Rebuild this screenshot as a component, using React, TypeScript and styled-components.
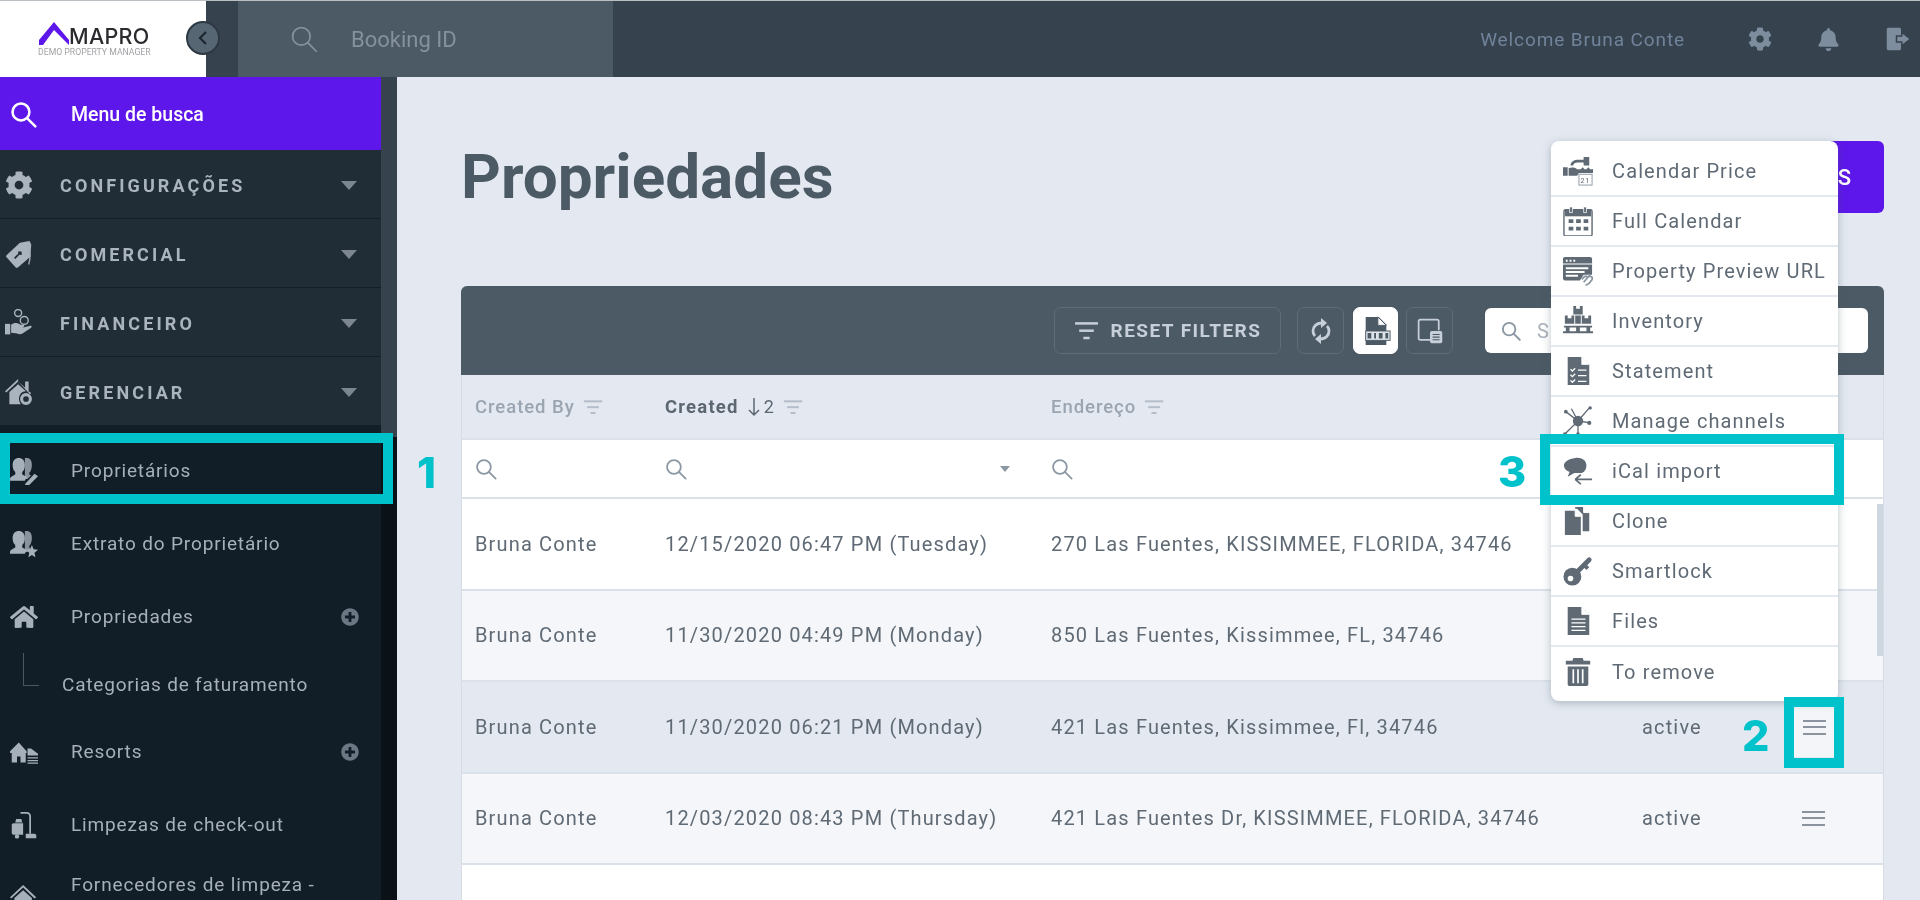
import React from "react";
import styled, { createGlobalStyle } from "styled-components";
import { FaBell, FaCog, FaHome, FaPlusCircle } from "react-icons/fa";

const CYAN = "#00c2cb";
const SLATE = "#4c5a65";
const TEXT = "#5f6a75";

const GlobalStyle = createGlobalStyle`
  html, body { margin: 0; padding: 0; background: #e4e9f1; }
  body { font-family: Roboto, "Liberation Sans", sans-serif; }
  * { box-sizing: border-box; }
`;

const Page = styled.div`
  position: relative;
  width: 1920px;
  height: 900px;
  overflow: hidden;
  display: flex;
  flex-direction: column;
  filter: blur(0.35px);
`;

/* top bar */
const TopBar = styled.header`
  flex: none;
  height: 77px;
  display: flex;
  background: #36434e;
  border-top: 1px solid #b9bec3;
`;

const LogoBox = styled.div`
  width: 206px;
  background: #fff;
  display: flex;
  flex-direction: column;
  padding: 21px 0 0 39px;
`;

const LogoMark = styled.div`
  display: flex;
  align-items: flex-end;
  height: 23px;
  color: #2b2b2f;
  font: 500 21.5px/17px "Inter", sans-serif;
  letter-spacing: 0.3px;
`;

const LogoSub = styled.div`
  margin-top: 3px;
  margin-left: -1px;
  color: #a2a2a6;
  font: 400 8.7px/9px Roboto, sans-serif;
  white-space: nowrap;
  text-transform: uppercase;
`;

const Toggle = styled.div`
  position: absolute;
  left: 186px;
  top: 21px;
  width: 34px;
  height: 34px;
  border-radius: 50%;
  background: #566673;
  border: 2px solid #2c3842;
  display: grid;
  place-items: center;
`;

const BookingSearch = styled.div`
  width: 375px;
  margin-left: 32px;
  background: ${SLATE};
  display: flex;
  align-items: center;
  padding-left: 52px;
  gap: 33px;
  color: #85919c;
  font-size: 22px;
`;

const TopRight = styled.div`
  margin-left: auto;
  display: flex;
  align-items: center;
  color: #71839a;
  font-size: 19px;
  letter-spacing: 0.9px;
  padding-right: 10px;
`;

const TopIcon = styled.span`
  display: flex;
  color: #7d8d9d;
  margin-left: ${(p: { $gap: number }) => p.$gap}px;
`;

/* layout */
const Body = styled.div`
  flex: 1;
  display: flex;
  min-height: 0;
`;

const Sidebar = styled.aside`
  flex: none;
  width: 381px;
  background: #121e27;
  display: flex;
  flex-direction: column;
  overflow: hidden;
`;

const SideTrack = styled.div`
  flex: none;
  width: 16px;
  background: #0a1117;
  display: flex;
  flex-direction: column;
`;

const SideThumb = styled.div`
  height: 360px;
  background: #36434e;
`;

const SearchMenu = styled.div`
  flex: none;
  height: 73px;
  background: #5e17eb;
  display: flex;
  align-items: center;
  padding: 2px 0 0 10px;
  gap: 34px;
  color: #fff;
  font-size: 19.5px;
  font-weight: 500;
`;

const Section = styled.div`
  flex: none;
  height: 69px;
  background: #202c36;
  border-bottom: 1px solid #161f27;
  display: flex;
  align-items: center;
  padding: 2px 24px 0 5px;
  color: #aab4be;
  font-size: 18px;
  font-weight: 700;
  letter-spacing: 3.1px;
`;

const SectionLabel = styled.span`
  margin-left: 27px;
  flex: 1;
`;

const Caret = styled.span`
  width: 0;
  height: 0;
  border-left: 8px solid transparent;
  border-right: 8px solid transparent;
  border-top: 9px solid #7b8691;
`;

const NavList = styled.nav`
  flex: none;
  padding-top: 8px;
`;

const NavItem = styled.div`
  height: 73px;
  display: flex;
  align-items: center;
  padding: 0 22px 0 10px;
  gap: 33px;
  color: #a6b0bb;
  font-size: 19px;
  letter-spacing: 0.85px;
  line-height: 26px;
`;

const NavLabel = styled.span`
  flex: 1;
  white-space: nowrap;
`;

/* the second line of this label falls below the fold */
const ClippedLabel = styled(NavLabel)`
  margin-bottom: 26px;
`;

const SubItem = styled.div`
  height: 62px;
  display: flex;
  align-items: center;
  padding-left: 23px;
  color: #a6b0bb;
  font-size: 19px;
  letter-spacing: 0.8px;
`;

const SubLine = styled.span`
  align-self: flex-start;
  width: 16px;
  height: 33px;
  border-left: 1px solid #4a5661;
  border-bottom: 1px solid #4a5661;
  margin-right: 23px;
`;

/* main */
const Main = styled.main`
  flex: 1;
  min-width: 0;
  padding: 64px 36px 0 64px;
  background: #e4e9f1;
`;

const TitleRow = styled.div`
  height: 72px;
  margin-bottom: 73px;
  display: flex;
  align-items: center;
  justify-content: space-between;
`;

const Title = styled.h1`
  margin: 0;
  color: ${SLATE};
  font-size: 62px;
  font-weight: 700;
  line-height: 72px;
`;

const AddButton = styled.button`
  height: 72px;
  width: 190px;
  border: 0;
  border-radius: 6px;
  background: #5e17eb;
  color: #fff;
  font: 500 22px Roboto, sans-serif;
  text-align: right;
  padding: 0 33px 0 0;
`;

const Table = styled.section`
  position: relative;
  border-radius: 6px 6px 0 0;
  overflow: hidden;
`;

const Toolbar = styled.div`
  height: 89px;
  background: ${SLATE};
  display: flex;
  align-items: center;
  justify-content: flex-end;
  padding: 0 16px 0 0;
`;

const ToolButton = styled.button<{ $w: number; $gap: number; $on?: boolean }>`
  width: ${(p) => p.$w}px;
  height: 47px;
  margin-right: ${(p) => p.$gap}px;
  border: 1px solid ${(p) => (p.$on ? "#fff" : "#5e6c78")};
  border-radius: 7px;
  background: ${(p) => (p.$on ? "#fff" : "transparent")};
  color: #c6cfd9;
  display: flex;
  align-items: center;
  justify-content: center;
  gap: 12px;
  padding: 0;
  font: 700 19px Roboto, sans-serif;
  letter-spacing: 1.45px;
  white-space: nowrap;
`;

const TableSearch = styled.div`
  width: 383px;
  height: 45px;
  border-radius: 6px;
  background: #fff;
  display: flex;
  align-items: center;
  padding-left: 16px;
  gap: 16px;
  color: #a9b2bb;
  font-size: 20px;
`;

const Row = styled.div<{ $bg: string; $h: number }>`
  height: ${(p) => p.$h}px;
  display: grid;
  grid-template-columns: 190px 386px 591px 155px 1fr;
  align-items: center;
  background: ${(p) => p.$bg};
  border-left: 1px solid #d5dce5;
  border-right: 1px solid #d5dce5;
  border-bottom: 2px solid #dbe1e9;
  color: ${TEXT};
  font-size: 20px;
  letter-spacing: 1.16px;
`;

const Cell = styled.div`
  padding-left: 13px;
  white-space: nowrap;
  display: flex;
  align-items: center;
`;

const HeadCell = styled(Cell)<{ $strong?: boolean }>`
  color: ${(p) => (p.$strong ? "#5c6772" : "#9aa5b1")};
  font-size: 18.5px;
  font-weight: ${(p) => (p.$strong ? 700 : 500)};
  letter-spacing: ${(p) => (p.$strong ? 1.2 : 0.95)}px;
  gap: 8px;
`;

const SortMark = styled.span`
  display: flex;
  align-items: center;
  font-weight: 400;
  font-size: 18px;
  gap: 3px;
`;

const FilterCell = styled(Cell)`
  justify-content: space-between;
  padding-right: 28px;
`;

const SmallCaret = styled.span`
  width: 0;
  height: 0;
  border-left: 5px solid transparent;
  border-right: 5px solid transparent;
  border-top: 6px solid #8b97a3;
`;

const ActionButton = styled.div<{ $on?: boolean }>`
  width: 40px;
  height: ${(p) => (p.$on ? 51 : 24)}px;
  margin: ${(p) => (p.$on ? "10px 0 0 10px" : "0 0 0 9px")};
  padding-bottom: ${(p) => (p.$on ? 9 : 0)}px;
  background: ${(p) => (p.$on ? "#f3f5f8" : "transparent")};
  display: grid;
  place-items: center;
`;

const Burger = styled.div`
  width: 23px;
  height: 15px;
  border-top: 2.5px solid #8b949e;
  border-bottom: 2.5px solid #8b949e;
  position: relative;
  &::after {
    content: "";
    position: absolute;
    left: 0;
    right: 0;
    top: 3.75px;
    height: 2.5px;
    background: #8b949e;
  }
`;

const TableThumb = styled.div`
  position: absolute;
  right: 1px;
  top: 218px;
  width: 6px;
  height: 152px;
  background: #ced6e0;
`;

/* popup */
const Popup = styled.div`
  position: absolute;
  left: 1551px;
  top: 141px;
  width: 287px;
  height: 560px;
  padding-top: 6px;
  border-radius: 8px;
  background: #fff;
  box-shadow: 0 2px 8px rgba(70, 85, 100, 0.35);
`;

const PopupItem = styled.div`
  height: 50px;
  display: flex;
  align-items: center;
  padding-left: 12px;
  gap: 19px;
  border-bottom: 2px solid #e4e9f1;
  color: ${TEXT};
  font-size: 20px;
  letter-spacing: 1.12px;
  white-space: nowrap;
  &:last-child {
    border-bottom: 0;
  }
`;

/* tutorial marks */
const Frame = styled.div<{ $x: number; $y: number; $w: number; $h: number }>`
  position: absolute;
  left: ${(p) => p.$x}px;
  top: ${(p) => p.$y}px;
  width: ${(p) => p.$w}px;
  height: ${(p) => p.$h}px;
  border: 10px solid ${CYAN};
`;

const Mark = styled.div<{ $x: number; $y: number }>`
  position: absolute;
  left: ${(p) => p.$x}px;
  top: ${(p) => p.$y}px;
  color: ${CYAN};
  font: 800 43px/44px Inter, sans-serif;
`;

const IconSvg = styled.svg<{ $s: number }>`
  flex: none;
  display: block;
  width: ${(p) => p.$s}px;
  height: ${(p) => p.$s}px;
`;

const Glyph = ({ s = 30, children }: { s?: number; children: React.ReactNode }) => (
  <IconSvg $s={s} viewBox="0 0 32 32" fill="currentColor">
    {children}
  </IconSvg>
);

const SearchIcon = ({ s, color, w = 2.6 }: { s: number; color: string; w?: number }) => (
  <IconSvg $s={s} viewBox="0 0 32 32" fill="none" stroke={color} strokeWidth={w} strokeLinecap="round">
    <circle cx="13" cy="13" r="10" />
    <path d="M20.5 20.5 30 30" />
  </IconSvg>
);

const FilterIcon = ({ s, color }: { s: number; color: string }) => (
  <IconSvg $s={s} viewBox="0 0 24 24" fill={color}>
    <rect x="1" y="4" width="22" height="2.4" />
    <rect x="5" y="11" width="14" height="2.4" />
    <rect x="9" y="18" width="6" height="2.4" />
  </IconSvg>
);

const RefreshIcon = () => (
  <IconSvg $s={26} viewBox="0 0 24 26" fill="#c6cfd9">
    <path d="M13 5C7 5 4 9 4 13c0 2 1 4 2 5M11 21c6 0 9-4 9-8 0-2-1-4-2-5" fill="none" stroke="#c6cfd9" strokeWidth="2.800" />
    <path d="M12 0v10l6-5ZM12 16v10l-6-5Z" />
  </IconSvg>
);

const TagIcon = () => (
  <Glyph s={28}>
    <path d="M2 17 17 3l11-2 2 4-1 14-14 12c-1 1-2 1-3 0L2 20c-1-1-1-2 0-3Z" />
    <path d="m11 21 7-7M15 14h3v3" stroke="#202c36" strokeWidth="2" fill="none" />
    <path d="M26 4c3 8 3 18 1 24" stroke="#a3adb8" strokeWidth="1.5" fill="none" />
  </Glyph>
);

const HandIcon = () => (
  <Glyph s={28}>
    <circle cx="15" cy="4.5" r="4" fill="none" stroke="currentColor" strokeWidth="1.6" />
    <circle cx="22" cy="13" r="4.5" fill="none" stroke="currentColor" strokeWidth="1.6" />
    <rect x="0" y="17" width="6" height="12" />
    <path d="M7 18c4-3 7-2 11 0h3c2 1 1 3-1 3h-5 6l8-2c2 0 2 2 0 3l-9 6c-2 1-4 1-6 0l-7-1Z" />
  </Glyph>
);

const GearHouseIcon = () => (
  <Glyph s={28}>
    <path d="M15 1 0 15l1.5 1.5L15 4l8 7V4h4v11l3 2-1.500 1.500L15 4Z" />
    <path d="M5 16 15 7l9 8c-5 0-8 4-8 9 0 2 1 4 2 6H5Z" />
    <circle cx="24" cy="24" r="5" fill="none" stroke="currentColor" strokeWidth="3.500" />
  </Glyph>
);

const OwnersBase = () => (
  <>
    <path d="M19 1c4 0 6 3 6 8 0 4-1 7-3 9v2l2 1-4 4h-3V1Z" opacity="0.8" />
    <path d="M10 1c4 0 7 3 7 8 0 4-1 6-3 8v3l6 3-2 2-1 2H0v-2c0-2 2-3 6-5v-3c-2-2-3-4-3-8 0-5 3-8 7-8Z" />
  </>
);

const OwnerEditIcon = () => (
  <Glyph s={28}>
    <OwnersBase />
    <path d="m18 30 10-11 4 3-10 10h-5Z" />
  </Glyph>
);

const OwnerStarIcon = () => (
  <Glyph s={28}>
    <OwnersBase />
    <path d="m25 17 2 5 5 .5-4 3.500 1 5-4-2.500-4 2.500 1-5-4-3.500 5-.5Z" />
  </Glyph>
);

const ResortIcon = () => (
  <Glyph s={28}>
    <path d="M10 5 0 15v2h2v11h6v-7h4v7h6V17h1v-2L10 5Z" />
    <path d="M20 12h4l8 6v2H20ZM20 22h12v1.500H20ZM20 25h12v1.500H20ZM20 28h12v1.500H20Z" />
  </Glyph>
);

const VacuumIcon = () => (
  <Glyph s={28}>
    <path d="M12 1h7c3 0 5 2 5 5v20h-2V6c0-2-1-3-3-3h-7Z" />
    <path d="M4 14h11v13H4c-1 0-2-1-2-2V16c0-1 1-2 2-2ZM7 9h6l1 4H6Z" />
    <path d="M18 26h10c1 0 2 1 2 2v3H18Z" />
    <circle cx="8" cy="29" r="2.500" />
  </Glyph>
);

const SupplierIcon = () => (
  <Glyph s={28}>
    <path d="M15 1 0 15l1.500 1.500L15 4l13 12.500L30 15Z" />
    <path d="M5 16 15 7l10 9v14H5Z" />
  </Glyph>
);

const ExitIcon = () => (
  <Glyph s={24}>
    <path d="M3 1h15c1 0 2 1 2 2v8h-7v10h7v8c0 1-1 2-2 2H3c-1 0-2-1-2-2V3c0-1 1-2 2-2Z" />
    <path d="M15 13h7V9l9 7-9 7v-4h-7Z" />
  </Glyph>
);

const XlsIcon = () => (
  <IconSvg $s={30} viewBox="0 0 32 32" fill={SLATE}>
    <path d="M5 1h14l8 8v22H5Z" />
    <path d="M18 1v9h9Z" fill="#fff" stroke={SLATE} strokeWidth="1" />
    <rect x="5" y="16" width="26" height="10" fill="#dfe4ea" stroke={SLATE} strokeWidth="1" />
    <path d="M7 18h4v6H7ZM14 18h2v6h-2ZM19 18h4v6h-4ZM26 18h3v6h-3Z" />
  </IconSvg>
);

const SheetIcon = () => (
  <IconSvg $s={28} viewBox="0 0 32 32" fill="none" stroke="#c6cfd9" strokeWidth="2">
    <path d="M16 26H5c-1 0-2-1-2-2V5c0-1 1-2 2-2h19c1 0 2 1 2 2v10" />
    <rect x="16" y="16" width="14" height="14" rx="2" fill="#c6cfd9" stroke="none" />
    <path d="M19 20h8M19 23h8M19 26h8" stroke={SLATE} strokeWidth="1.400" />
  </IconSvg>
);

const popupItems: [string, React.ReactNode][] = [
  [
    "Calendar Price",
    <Glyph key="a">
      <path d="M8 10c0-4 4-6 8-6h6V1h6v9h-6V7h-6c-3 0-5 1-5 3Z" />
      <path d="M0 12h5v9H0ZM6 13c3-1 6-1 9 1h4l2-2 2 2h2l2-2 2 2h3v4H17l-2 3H6Z" />
      <rect x="17" y="19.500" width="14" height="11.500" fill="#fff" stroke="#8b97a3" />
      <text x="24" y="28.500" fontSize="7.500" textAnchor="middle" fontFamily="Roboto">21</text>
    </Glyph>,
  ],
  [
    "Full Calendar",
    <Glyph key="b">
      <path d="M3 4h26c1 0 2 1 2 2v24c0 1-1 2-2 2H3c-1 0-2-1-2-2V6c0-1 1-2 2-2Z" fill="none" stroke="currentColor" strokeWidth="1.500" />
      <path d="M2 4h28v7H2Z" />
      <path d="M7 1h3v6H7ZM22 1h3v6h-3Z" stroke="#fff" strokeWidth="0.800" />
      <path d="M6 14h5v4H6ZM14 14h5v4h-5ZM22 14h5v4h-5ZM6 22h5v4H6ZM14 22h5v4h-5ZM22 22h5v4h-5Z" />
    </Glyph>,
  ],
  [
    "Property Preview URL",
    <Glyph key="c">
      <path d="M2 1h27c1 0 2 1 2 2v17h-9l-4 6H2c-1 0-2-1-2-2V3c0-1 1-2 2-2Z" />
      <path d="M3 4h2v2H3ZM7 4h2v2H7ZM11 4h2v2h-2ZM0 8h31v1H0ZM3 12h24v2H3ZM3 16h20v2H3ZM3 20h13v2H3Z" fill="#fff" />
      <path d="m22 28 7-8M20 25l3-3c2-1 3 0 3 1M24 31c2 0 3-1 4-2l3-4c1-2-1-4-3-3" fill="none" stroke="#8b97a3" strokeWidth="2" />
    </Glyph>,
  ],
  [
    "Inventory",
    <Glyph key="d">
      <path d="M11 0h3v3h4V0h3v9H11ZM2 10h3v3h4v-3h3v9H2ZM13 10h6v9h-6ZM20 10h3v3h4v-3h3v9H20Z" />
      <path d="M1 21h30v2H1ZM3 23h4v4H3ZM14 23h4v4h-4ZM25 23h4v4h-4ZM0 27h32v2H0Z" />
    </Glyph>,
  ],
  [
    "Statement",
    <Glyph key="e">
      <path d="M5 1h15l8 8v22H5Z" />
      <path d="M20 1v8h8Z" fill="#fff" stroke="#fff" strokeWidth="0.800" />
      <path d="m8 14 2 2 3-3M8 20l2 2 3-3M8 26l2 2 3-3M16 15h9M16 21h9M16 27h9" fill="none" stroke="#fff" strokeWidth="1.400" />
    </Glyph>,
  ],
  [
    "Manage channels",
    <Glyph key="f">
      <path d="m3 6 13 10L29 1M16 16 1 31M16 16l13 2M16 16v15M16 16 9 3" fill="none" stroke="currentColor" strokeWidth="1.400" />
      <circle cx="16" cy="16" r="5.500" />
      <circle cx="3" cy="6" r="2" />
      <circle cx="29" cy="2" r="1.800" />
      <circle cx="2" cy="30" r="2" />
      <circle cx="28" cy="18" r="2.200" />
      <circle cx="16" cy="30" r="2" />
    </Glyph>,
  ],
  [
    "iCal import",
    <Glyph key="g">
      <path d="M13 2c6-1 12 2 12 8 0 4-2 7-5 8h-8l-7 4 2-5C3 15 1 13 1 10c0-4 5-7 12-8Z" />
      <path d="M13 25h18M13 25l6-5M13 25l6 5" fill="none" stroke="currentColor" strokeWidth="1.800" />
    </Glyph>,
  ],
  [
    "Clone",
    <Glyph key="h">
      <path d="M2 5h11l6 6v20H2Z" />
      <path d="M13 5v6h6Z" fill="#fff" stroke="#fff" />
      <path d="M13 1h9l6 6v20h-7V9l-6-6h-2Z" />
      <path d="M22 1v6h6Z" fill="#fff" stroke="#fff" />
    </Glyph>,
  ],
  [
    "Smartlock",
    <Glyph key="i">
      <path d="M12 20 28 4" stroke="currentColor" strokeWidth="5" strokeLinecap="round" fill="none" />
      <path d="m21 11 4 4 3-3-4-4Z" />
      <circle cx="10" cy="22" r="9.500" />
      <circle cx="8" cy="24" r="3" fill="#fff" />
    </Glyph>,
  ],
  [
    "Files",
    <Glyph key="j">
      <path d="M5 1h15l8 8v22H5Z" />
      <path d="M20 1v8h8Z" fill="#fff" stroke="#fff" strokeWidth="0.800" />
      <path d="M9 14h15M9 18h15M9 22h15M9 26h15" stroke="#fff" strokeWidth="1.400" />
    </Glyph>,
  ],
  [
    "To remove",
    <Glyph key="k">
      <path d="M11 1h10l1 3h7v4H3V4h7Z" />
      <path d="M5 10h22v19c0 1-1 2-2 2H7c-1 0-2-1-2-2Z" />
      <path d="M11 13v15M16 13v15M21 13v15" stroke="#fff" strokeWidth="1.800" />
    </Glyph>,
  ],
];

const rows = [
  { created: "12/15/2020 06:47 PM (Tuesday)", address: "270 Las Fuentes, KISSIMMEE, FLORIDA, 34746", bg: "#fff", status: "" },
  { created: "11/30/2020 04:49 PM (Monday)", address: "850 Las Fuentes, Kissimmee, FL, 34746", bg: "#f4f6f9", status: "" },
  { created: "11/30/2020 06:21 PM (Monday)", address: "421 Las Fuentes, Kissimmee, Fl, 34746", bg: "#e4e9f1", status: "active", on: true },
  { created: "12/03/2020 08:43 PM (Thursday)", address: "421 Las Fuentes Dr, KISSIMMEE, FLORIDA, 34746", bg: "#f4f6f9", status: "active" },
];

export default function App() {
  return (
    <Page>
      <GlobalStyle />
      <TopBar>
        <LogoBox>
          <LogoMark>
            <svg width="30" height="23" viewBox="0 0 30 23" fill="#5e17eb">
              <path d="M15 0 30 18v5L15 8 4 23H0v-5Z" />
            </svg>
            MAPRO
          </LogoMark>
          <LogoSub>Demo Property Manager</LogoSub>
        </LogoBox>
        <BookingSearch>
          <SearchIcon s={28} color="#85919c" w={2} />
          Booking ID
        </BookingSearch>
        <TopRight>
          Welcome Bruna Conte
          <TopIcon $gap={63}>
            <FaCog size={24} />
          </TopIcon>
          <TopIcon $gap={45}>
            <FaBell size={23} />
          </TopIcon>
          <TopIcon $gap={46}>
            <ExitIcon />
          </TopIcon>
        </TopRight>
      </TopBar>

      <Body>
        <Sidebar>
          <SearchMenu>
            <SearchIcon s={27} color="#fff" w={3} />
            Menu de busca
          </SearchMenu>
          <Section>
            <FaCog size={28} />
            <SectionLabel>CONFIGURAÇÕES</SectionLabel>
            <Caret />
          </Section>
          <Section>
            <TagIcon />
            <SectionLabel>COMERCIAL</SectionLabel>
            <Caret />
          </Section>
          <Section>
            <HandIcon />
            <SectionLabel>FINANCEIRO</SectionLabel>
            <Caret />
          </Section>
          <Section>
            <GearHouseIcon />
            <SectionLabel>GERENCIAR</SectionLabel>
            <Caret />
          </Section>
          <NavList>
            <NavItem>
              <OwnerEditIcon />
              <NavLabel>Proprietários</NavLabel>
            </NavItem>
            <NavItem>
              <OwnerStarIcon />
              <NavLabel>Extrato do Proprietário</NavLabel>
            </NavItem>
            <NavItem>
              <FaHome size={28} />
              <NavLabel>Propriedades</NavLabel>
              <FaPlusCircle size={18} color="#6b7783" />
            </NavItem>
            <SubItem>
              <SubLine />
              Categorias de faturamento
            </SubItem>
            <NavItem>
              <ResortIcon />
              <NavLabel>Resorts</NavLabel>
              <FaPlusCircle size={18} color="#6b7783" />
            </NavItem>
            <NavItem>
              <VacuumIcon />
              <NavLabel>Limpezas de check-out</NavLabel>
            </NavItem>
            <NavItem>
              <SupplierIcon />
              <ClippedLabel>Fornecedores de limpeza -</ClippedLabel>
            </NavItem>
          </NavList>
        </Sidebar>
        <SideTrack>
          <SideThumb />
        </SideTrack>

        <Main>
          <TitleRow>
            <Title>Propriedades</Title>
            <AddButton>S</AddButton>
          </TitleRow>
          <Table>
            <Toolbar>
              <ToolButton $w={227} $gap={16}>
                <FilterIcon s={25} color="#c6cfd9" />
                RESET FILTERS
              </ToolButton>
              <ToolButton $w={47} $gap={9}>
                <RefreshIcon />
              </ToolButton>
              <ToolButton $w={45} $gap={8} $on>
                <XlsIcon />
              </ToolButton>
              <ToolButton $w={47} $gap={32}>
                <SheetIcon />
              </ToolButton>
              <TableSearch>
                <SearchIcon s={20} color="#8b97a3" w={3} />
                S
              </TableSearch>
            </Toolbar>
            <Row $bg="#e4e9f1" $h={65}>
              <HeadCell>
                Created By
                <FilterIcon s={20} color="#b4bdc8" />
              </HeadCell>
              <HeadCell $strong>
                Created
                <SortMark>
                  <svg width="14" height="20" viewBox="0 0 14 20" fill="none" stroke="#5c6772" strokeWidth="1.500">
                    <path d="M7 1v17M2 13l5 5 5-5" />
                  </svg>
                  2
                </SortMark>
                <FilterIcon s={20} color="#b4bdc8" />
              </HeadCell>
              <HeadCell>
                Endereço
                <FilterIcon s={20} color="#b4bdc8" />
              </HeadCell>
              <HeadCell />
              <HeadCell />
            </Row>
            <Row $bg="#fff" $h={59}>
              <FilterCell>
                <SearchIcon s={22} color="#8b97a3" />
              </FilterCell>
              <FilterCell>
                <SearchIcon s={22} color="#8b97a3" />
                <SmallCaret />
              </FilterCell>
              <FilterCell>
                <SearchIcon s={22} color="#8b97a3" />
              </FilterCell>
              <Cell />
              <Cell />
            </Row>
            {rows.map((row) => (
              <Row key={row.created} $bg={row.bg} $h={91.5}>
                <Cell>Bruna Conte</Cell>
                <Cell>{row.created}</Cell>
                <Cell>{row.address}</Cell>
                <Cell>{row.status}</Cell>
                <div>
                  <ActionButton $on={row.on}>
                    <Burger />
                  </ActionButton>
                </div>
              </Row>
            ))}
            <Row $bg="#fff" $h={60} />
            <TableThumb />
          </Table>
        </Main>
      </Body>

      <Popup>
        {popupItems.map(([label, icon]) => (
          <PopupItem key={label}>
            {icon}
            {label}
          </PopupItem>
        ))}
      </Popup>

      <Frame $x={0} $y={433} $w={393} $h={71} />
      <Mark $x={417} $y={450}>1</Mark>
      <Frame $x={1784} $y={697} $w={60} $h={71} />
      <Mark $x={1742} $y={713}>2</Mark>
      <Frame $x={1540} $y={434} $w={304} $h={71} />
      <Mark $x={1498} $y={449}>3</Mark>
      <Toggle>
        <svg width="12" height="16" viewBox="0 0 12 16" fill="none" stroke="#1d2730" strokeWidth="2.200">
          <path d="M9 2 3 8l6 6" />
        </svg>
      </Toggle>
    </Page>
  );
}
